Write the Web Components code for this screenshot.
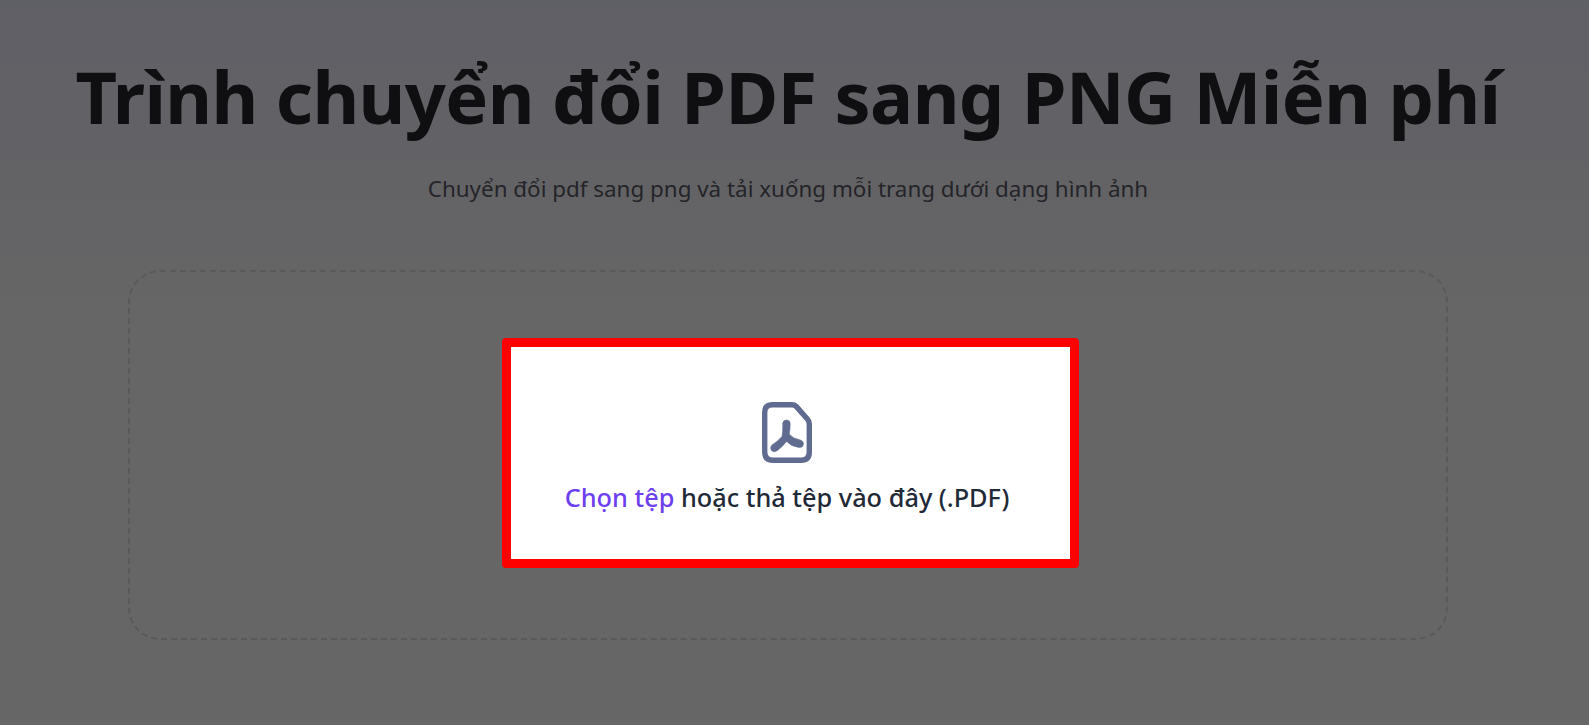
<!DOCTYPE html>
<html lang="vi">
<head>
<meta charset="utf-8">
<title>PDF sang PNG</title>
<style>
  html, body { margin: 0; height: 100%; overflow: hidden; }
  body { font-family: "Noto Sans", "Open Sans", sans-serif; }
</style>
</head>
<body>
<app-page>
  <app-hero>
    <span slot="title">Trình chuyển đổi PDF sang PNG Miễn phí</span>
    <span slot="subtitle">Chuyển đổi pdf sang png và tải xuống mỗi trang dưới dạng hình ảnh</span>
  </app-hero>
  <app-dropzone>
    <span slot="pick">Chọn tệp</span>
    <span slot="rest">hoặc thả tệp vào đây (.PDF)</span>
  </app-dropzone>
</app-page>

<script>
class AppPage extends HTMLElement {
  constructor() {
    super();
    this.attachShadow({ mode: "open" });
    this.shadowRoot.innerHTML = `
      <style>
        :host {
          display: block;
          position: relative;
          height: 725px;
          overflow: hidden;
          background: linear-gradient(180deg, #eeeeff 0%, #ffffff 45%);
        }
        .content {
          display: flex;
          flex-direction: column;
          align-items: center;
          padding-right: 13px;
        }
        .overlay {
          position: absolute;
          inset: 0;
          background-color: rgba(0, 0, 0, 0.6);
          z-index: 1;
        }
      </style>
      <div class="content"><slot></slot></div>
      <div class="overlay"></div>
    `;
  }
}

class AppHero extends HTMLElement {
  constructor() {
    super();
    this.attachShadow({ mode: "open" });
    this.shadowRoot.innerHTML = `
      <style>
        :host {
          display: block;
          text-align: center;
          padding-top: 50px;
        }
        h1 {
          margin: 0;
          font-size: 72px;
          line-height: 92px;
          font-weight: 700;
          letter-spacing: -0.6px;
          color: #26262b;
          white-space: nowrap;
        }
        p {
          margin: 32px 0 0;
          font-size: 22.4px;
          line-height: 30px;
          color: #5b5b66;
        }
      </style>
      <h1><slot name="title"></slot></h1>
      <p><slot name="subtitle"></slot></p>
    `;
  }
}

class AppDropzone extends HTMLElement {
  constructor() {
    super();
    this.attachShadow({ mode: "open" });
    this.shadowRoot.innerHTML = `
      <style>
        :host {
          display: flex;
          align-items: center;
          justify-content: center;
          box-sizing: border-box;
          width: 1320px;
          height: 370px;
          margin-top: 66px;
          border: 2px dashed #dedede;
          border-radius: 32px;
        }
        .spot {
          position: relative;
          z-index: 2;
          display: flex;
          flex-direction: column;
          align-items: center;
          justify-content: center;
          box-sizing: border-box;
          width: 577px;
          height: 230px;
          margin: 0 0 5px 5px;
          padding: 9px 7px 0 0;
          background: #fff;
          border: 9px solid #f00;
          border-radius: 4px;
        }
        svg { display: block; width: 50px; height: 61px; }
        .label {
          margin-top: 19px;
          font-size: 25.3px;
          line-height: 30px;
          font-weight: 500;
          color: #1f2937;
        }
        .pick { color: #6d3ff0; }
      </style>
      <div class="spot">
        <svg viewBox="0 0 50 61" fill="#5f6b8f" stroke="#5f6b8f" stroke-linecap="round" stroke-linejoin="round">
          <path fill="none" stroke-width="5.4" d="M10.500 2.700H30q2.500 0 4.200 1.700L45.300 17q2 2 2 5V50q0 8.300-8.300 8.300H11Q2.700 58.300 2.700 50V10.500Q2.700 2.700 10.500 2.700Z"/>
          <path stroke-width="0.5" d="M20.800 21.500Q20.800 18 24.500 18Q28.200 18 28.200 21.500Q28.200 27 27.300 32Q31 36.500 37 37.500Q41.500 38.500 41.500 42Q41 45.800 37 45.500Q29 44.500 24.800 39.500Q20 45 15.500 48.500Q12 51 9.500 48.500Q7.500 45.500 10 43Q15.500 39.500 20 34.500Q20.800 29 20.800 21.500Z"/>
        </svg>
        <div class="label"><span class="pick"><slot name="pick"></slot></span> <slot name="rest"></slot></div>
      </div>
    `;
  }
}

customElements.define("app-page", AppPage);
customElements.define("app-hero", AppHero);
customElements.define("app-dropzone", AppDropzone);
</script>
</body>
</html>
